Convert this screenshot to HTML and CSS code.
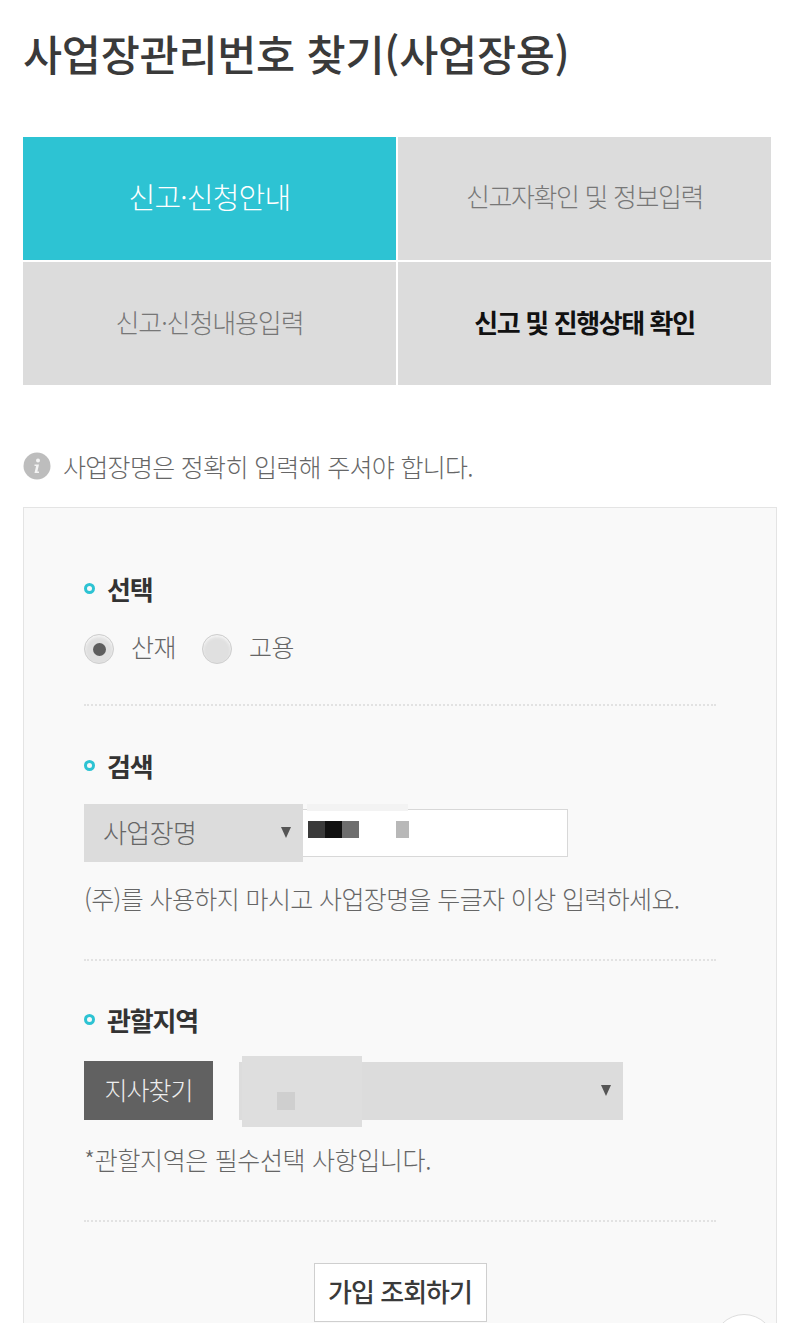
FILE: index.html
```html
<!DOCTYPE html>
<html lang="ko">
<head>
	<meta charset="UTF-8">
	<title>사업장관리번호 찾기(사업장용)</title>
	<link rel="stylesheet" href="styles.css">
</head>
<body>
	<h1 class="title">사업장관리번호 찾기(사업장용)</h1>

	<ul class="steps">
		<li class="on">신고·신청안내</li>
		<li class="wide">신고자확인 및 정보입력</li>
		<li>신고·신청내용입력</li>
		<li class="now">신고 및 진행상태 확인</li>
	</ul>

	<p class="notice">
		<svg class="ico_info" width="28" height="28" viewBox="0 0 28 28">
			<circle cx="14" cy="14" r="13.5" fill="#bdbdbd"/>
			<circle cx="15" cy="8.5" r="2" fill="#f4f4f4"/>
			<path d="M11.5 12.5h4.5l-1.6 7h1.6v1.6h-4.5l1.6-7h-1.6z" fill="#f4f4f4"/>
		</svg>
		사업장명은 정확히 입력해 주셔야 합니다.
	</p>

	<div class="panel">
		<div class="sec sec_first">
			<h2 class="sec_tit">선택</h2>
			<div class="radios">
				<span class="radio checked"></span><span class="radio_txt">산재</span>
				<span class="radio"></span><span class="radio_txt">고용</span>
			</div>
		</div>

		<div class="sec">
			<h2 class="sec_tit">검색</h2>
			<div class="search_row">
				<div class="sel sel_type"><span class="sel_txt">사업장명</span><span class="arrow"></span></div>
				<div class="input_box">
					<i class="blur_top"></i>
					<span class="mosaic"><i class="m1"></i><i class="m2"></i><i class="m3"></i></span>
					<i class="m4"></i>
				</div>
			</div>
			<p class="help">(주)를 사용하지 마시고 사업장명을 두글자 이상 입력하세요.</p>
		</div>

		<div class="sec">
			<h2 class="sec_tit">관할지역</h2>
			<div class="area_row">
				<a href="javascript:;" class="btn_find">지사찾기</a>
				<div class="sel sel_area"><i class="blur_area"></i><i class="m5"></i><span class="arrow"></span></div>
			</div>
			<p class="help help_area">*관할지역은 필수선택 사항입니다.</p>
		</div>

		<div class="btn_wrap"><a href="javascript:;" class="btn_join">가입 조회하기</a></div>

		<div class="float_btn"></div>
	</div>
</body>
</html>
```

FILE: styles.css
```css
*{margin: 0; padding: 0; box-sizing: border-box;}
li{list-style: none;}
a{text-decoration: none;}
i{display: block;}
html, body{height: 1324px; overflow: hidden;}
body{
	background: #fff;
	padding: 0 23px;
	font-family: "Noto Sans CJK KR", "Noto Sans", sans-serif;
	color: #666;
}
.title{
	padding-top: 24px;
	font-size: 42.5px;
	line-height: 58px;
	font-weight: 500;
	letter-spacing: -0.25px;
	color: #3a3a3a;
}
.steps{
	display: grid;
	grid-template-columns: 373px 373px;
	grid-auto-rows: 123px;
	gap: 2px;
	margin-top: 55px;
}
.steps li{
	display: flex;
	align-items: center;
	justify-content: center;
	padding-bottom: 4px;
	background: #dcdcdc;
	font-size: 26px;
	font-weight: 300;
	letter-spacing: -1.1px;
	color: #777;
}
.steps .on{
	padding-bottom: 6px;
	background: #2dc3d3;
	color: #fff;
	font-size: 29px;
	letter-spacing: -0.8px;
}
.steps .wide{
	padding-bottom: 6px;
	letter-spacing: -1.4px;
}
.steps .now{
	font-weight: 700;
	letter-spacing: -1.4px;
	color: #111;
}
.notice{
	display: flex;
	align-items: center;
	gap: 12px;
	margin-top: 65px;
	height: 32px;
	font-size: 25px;
	font-weight: 300;
	letter-spacing: -0.7px;
	color: #666;
}
.panel{
	position: relative;
	margin-top: 25px;
	width: 754px;
	height: 816px;
	padding: 0 60px;
	background: #f9f9f9;
	border: 1px solid #e4e4e4;
	border-bottom: 0;
	overflow: hidden;
}
.sec{
	border-bottom: 2px dotted #e2e2e2;
}
.sec_first{
	height: 198px;
	padding-top: 61px;
}
.sec:nth-child(2){
	height: 255px;
	padding-top: 40px;
}
.sec:nth-child(3){
	height: 261px;
	padding-top: 39px;
}
.sec_tit{
	display: flex;
	align-items: center;
	gap: 12px;
	height: 38px;
	font-size: 26px;
	font-weight: 700;
	letter-spacing: -1.2px;
	color: #333;
}
.sec_tit:before{
	content: "";
	box-sizing: border-box;
	width: 11px;
	height: 11px;
	border: 3.5px solid #2dc3d3;
	border-radius: 50%;
}
.radios{
	display: flex;
	align-items: center;
	margin-top: 22px;
	height: 40px;
}
.radio{
	width: 30px;
	height: 30px;
	border-radius: 50%;
	background: #e0e0e0;
	border: 1px solid #cfcfcf;
	box-shadow: inset 0 2px 3px #f6f6f6;
}
.radio.checked{
	display: flex;
	align-items: center;
	justify-content: center;
}
.radio.checked:before{
	content: "";
	width: 13px;
	height: 13px;
	border-radius: 50%;
	background: #5e5e5e;
}
.radio_txt{
	margin: 0 26px 0 16px;
	padding: 0 0 6px 1px;
	font-size: 25px;
	font-weight: 300;
	letter-spacing: -0.5px;
	color: #666;
}
.search_row{
	display: flex;
	align-items: center;
	margin-top: 20px;
}
.sel{
	position: relative;
	height: 58px;
	background: #dcdcdc;
	font-size: 26px;
	font-weight: 300;
	line-height: 56px;
	color: #666;
}
.sel_type{
	width: 219px;
	padding-left: 19px;
}
.sel_txt{
	letter-spacing: -0.6px;
}
.arrow{
	position: absolute;
	top: 23px;
	right: 12px;
	border-top: 11px solid #555;
	border-left: 5px solid transparent;
	border-right: 5px solid transparent;
}
.input_box{
	position: relative;
	width: 265px;
	height: 48px;
	background: #fff;
	border: 1px solid #d8d8d8;
	border-left: 0;
}
.blur_top{
	position: absolute;
	top: -6px;
	left: 4px;
	width: 101px;
	height: 7px;
	background: #f3f3f3;
}
.mosaic{
	position: absolute;
	top: 11px;
	left: 5px;
	display: flex;
}
.mosaic i{
	width: 17px;
	height: 17px;
}
.m1{background: #3a3a3a;}
.m2{background: #111;}
.m3{background: #6e6e6e;}
.m4{
	position: absolute;
	top: 11px;
	left: 93px;
	width: 13px;
	height: 17px;
	background: #b8b8b8;
}
.help{
	margin-top: 17px;
	font-size: 25px;
	line-height: 38px;
	font-weight: 300;
	letter-spacing: -0.62px;
	color: #666;
}
.area_row{
	display: flex;
	align-items: center;
	gap: 26px;
	margin-top: 23px;
}
.btn_find{
	width: 129px;
	height: 59px;
	background: #616161;
	font-size: 25px;
	font-weight: 300;
	line-height: 56px;
	letter-spacing: -1px;
	text-align: center;
	color: #eee;
}
.sel_area{
	width: 384px;
}
.blur_area{
	position: absolute;
	top: -6px;
	left: 3px;
	width: 120px;
	height: 71px;
	background: #dedede;
}
.m5{
	position: absolute;
	top: 30px;
	left: 38px;
	width: 18px;
	height: 18px;
	background: #cfcfcf;
}
.help_area{
	margin-top: 20px;
	letter-spacing: -0.35px;
}
.btn_wrap{
	margin-top: 41px;
	text-align: center;
}
.btn_join{
	display: inline-block;
	width: 173px;
	height: 59px;
	background: #fff;
	border: 1px solid #cfcfcf;
	font-size: 26px;
	font-weight: 500;
	line-height: 54px;
	letter-spacing: -1px;
	color: #3a3a3a;
}
.float_btn{
	position: absolute;
	top: 806px;
	left: 689px;
	width: 62px;
	height: 62px;
	background: #fff;
	border: 1px solid #ddd;
	border-radius: 50%;
}
```
